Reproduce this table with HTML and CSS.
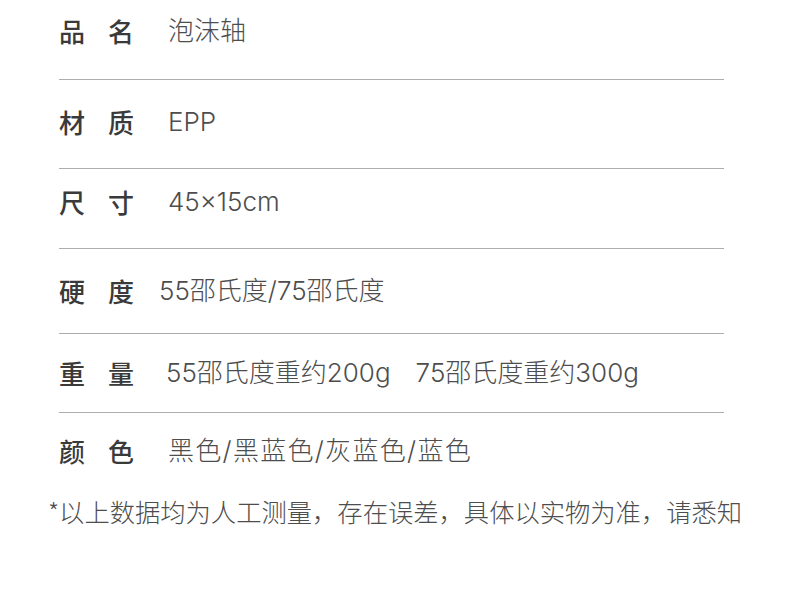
FILE: index.html
```html
<!DOCTYPE html>
<html lang="zh-CN">
<head>
    <meta charset="UTF-8">
    <meta name="viewport" content="width=device-width, initial-scale=1.0">
    <title>泡沫轴 产品参数</title>
    <link rel="stylesheet" href="styles.css">
</head>
<body>
    <div class="spec">
        <div class="row row-name">
            <span class="label">品名</span>
            <span class="value">泡沫轴</span>
        </div>
        <div class="row row-material">
            <span class="label">材质</span>
            <span class="value">EPP</span>
        </div>
        <div class="row row-size">
            <span class="label">尺寸</span>
            <span class="value">45×15cm</span>
        </div>
        <div class="row row-hardness">
            <span class="label">硬度</span>
            <span class="value">55邵氏度/75邵氏度</span>
        </div>
        <div class="row row-weight">
            <span class="label">重量</span>
            <span class="value">
                <span>55邵氏度重约200g</span><span class="next">75邵氏度重约300g</span>
            </span>
        </div>
        <div class="row row-color">
            <span class="label">颜色</span>
            <span class="value">黑色/黑蓝色/灰蓝色/蓝色</span>
        </div>
    </div>

    <p class="note">*以上数据均为人工测量，存在误差，具体以实物为准，请悉知</p>
</body>
</html>
```

FILE: styles.css
```css
body {
    margin: 0;
    background-color: #fff;
    font-family: "Noto Sans CJK SC", "Noto Sans", sans-serif;
    color: #444;
}

.spec {
    width: 665px;
    margin-left: 59px;
}

.row {
    display: flex;
    align-items: center;
    line-height: 30px;
    border-bottom: 1px solid #adadad;
}

.row:last-child {
    border-bottom: none;
}

.row-name     { padding: 16px 0 33px; }
.row-material { padding: 27px 0 31px; }
.row-size     { padding: 18px 0 31px; }
.row-hardness { padding: 27px 0 27px; }
.row-weight   { padding: 24px 0 24px; }
.row-color    { padding: 23px 0 0; }

.label {
    flex: 0 0 100px;
    font-size: 26px;
    font-weight: 500;
    letter-spacing: 23px;
    color: #3a3a3a;
    white-space: nowrap;
}

.value {
    padding-left: 9px;
    font-family: "Inter", "Noto Sans CJK SC", sans-serif;
    font-size: 26px;
    font-weight: 300;
    color: #4d4d4d;
    white-space: nowrap;
}

.row-hardness .value {
    padding-left: 0;
}

.row-weight .value {
    padding-left: 7px;
}

.row-weight .next {
    margin-left: 25px;
}

.row-color .value {
    letter-spacing: 1.3px;
}

.note {
    margin: 30px 0 0;
    text-align: center;
    font-size: 25.3px;
    font-weight: 300;
    line-height: 30px;
    color: #4d4d4d;
}
```
